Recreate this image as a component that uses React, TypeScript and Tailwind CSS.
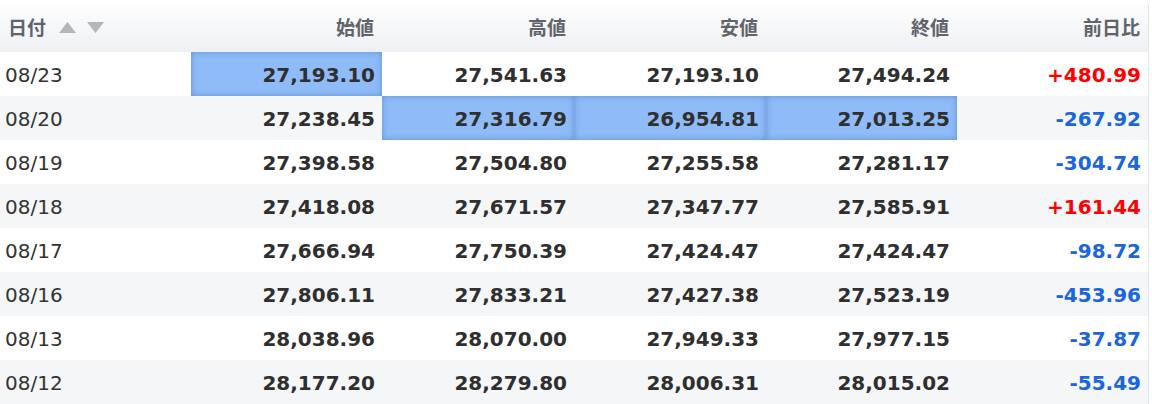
import React from "react";

type Row = {
  date: string;
  open: string;
  high: string;
  low: string;
  close: string;
  change: string;
  hl?: number[];
};

const rows: Row[] = [
  { date: "08/23", open: "27,193.10", high: "27,541.63", low: "27,193.10", close: "27,494.24", change: "+480.99", hl: [0] },
  { date: "08/20", open: "27,238.45", high: "27,316.79", low: "26,954.81", close: "27,013.25", change: "-267.92", hl: [1, 2, 3] },
  { date: "08/19", open: "27,398.58", high: "27,504.80", low: "27,255.58", close: "27,281.17", change: "-304.74" },
  { date: "08/18", open: "27,418.08", high: "27,671.57", low: "27,347.77", close: "27,585.91", change: "+161.44" },
  { date: "08/17", open: "27,666.94", high: "27,750.39", low: "27,424.47", close: "27,424.47", change: "-98.72" },
  { date: "08/16", open: "27,806.11", high: "27,833.21", low: "27,427.38", close: "27,523.19", change: "-453.96" },
  { date: "08/13", open: "28,038.96", high: "28,070.00", low: "27,949.33", close: "27,977.15", change: "-37.87" },
  { date: "08/12", open: "28,177.20", high: "28,279.80", low: "28,006.31", close: "28,015.02", change: "-55.49" },
];

const grid = "grid grid-cols-[191px_191px_192px_192px_191px_191px]";

const SortArrows = () => (
  <span className="ml-[13px] flex items-center gap-[11px]">
    <svg width="17" height="11" viewBox="0 0 17 11">
      <polygon points="8.5,0 17,11 0,11" fill="#b3b6bb" />
    </svg>
    <svg width="17" height="11" viewBox="0 0 17 11">
      <polygon points="0,0 17,0 8.5,11" fill="#b3b6bb" />
    </svg>
  </span>
);

export default function App() {
  return (
    <div className="w-[1152px] h-[404px] overflow-hidden bg-white font-['DejaVu_Sans','Noto_Sans_CJK_JP',sans-serif]">
      <div className="w-[1149px] border-r border-[#e2e4e8] rounded-tr-[6px] overflow-hidden">
        <div className={`${grid} h-[52px] bg-gradient-to-b from-white to-[#eef0f3] text-[19px] font-bold text-[#5f646c] font-['Noto_Sans_CJK_JP',sans-serif]`}>
          <div className="flex items-center pl-2 pt-[3px]">
            日付
            <SortArrows />
          </div>
          {["始値", "高値", "安値", "終値", "前日比"].map((h) => (
            <div key={h} className="flex items-center justify-end pr-2 pt-[3px]">
              {h}
            </div>
          ))}
        </div>
        {rows.map((r, i) => {
          const vals = [r.open, r.high, r.low, r.close];
          return (
            <div
              key={r.date}
              className={`${grid} h-[44px] ${i % 2 === 1 ? "bg-[#f5f6f8]" : "bg-white"}`}
            >
              <div className="flex items-center pl-[5px] pt-px text-[20px] text-[#333]">{r.date}</div>
              {vals.map((v, j) => (
                <div
                  key={j}
                  className={`flex items-center justify-end pr-[7px] pt-px text-[20px] font-bold text-[#2f2f2f] ${
                    r.hl?.includes(j) ? "bg-[#8fbcf7] shadow-[inset_0_0_6px_rgba(60,110,190,0.55)]" : ""
                  }`}
                >
                  {v}
                </div>
              ))}
              <div
                className={`flex items-center justify-end pr-[7px] pt-px text-[20px] font-bold ${
                  r.change.startsWith("+") ? "text-[#ff0000]" : "text-[#1b65dd]"
                }`}
              >
                {r.change}
              </div>
            </div>
          );
        })}
      </div>
    </div>
  );
}
